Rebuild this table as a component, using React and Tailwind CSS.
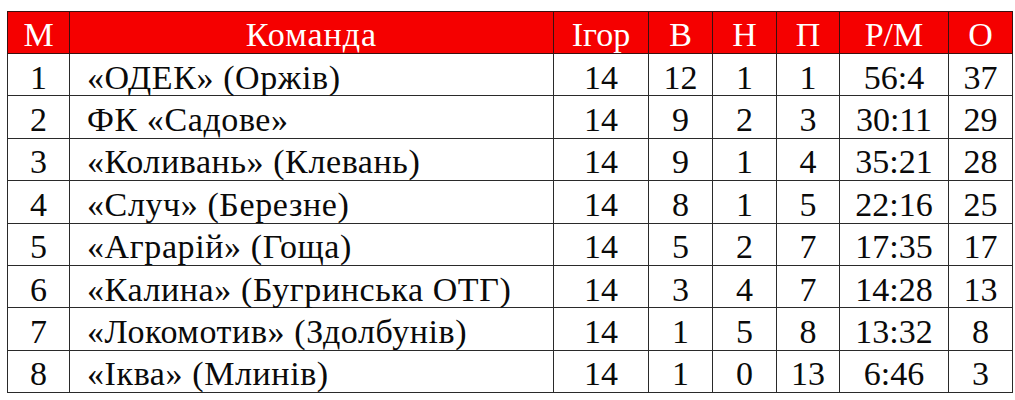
import React from "react";

const rows = [
  ["1", "«ОДЕК» (Оржів)", "14", "12", "1", "1", "56:4", "37"],
  ["2", "ФК «Садове»", "14", "9", "2", "3", "30:11", "29"],
  ["3", "«Коливань» (Клевань)", "14", "9", "1", "4", "35:21", "28"],
  ["4", "«Случ» (Березне)", "14", "8", "1", "5", "22:16", "25"],
  ["5", "«Аграрій» (Гоща)", "14", "5", "2", "7", "17:35", "17"],
  ["6", "«Калина» (Бугринська ОТГ)", "14", "3", "4", "7", "14:28", "13"],
  ["7", "«Локомотив» (Здолбунів)", "14", "1", "5", "8", "13:32", "8"],
  ["8", "«Іква» (Млинів)", "14", "1", "0", "13", "6:46", "3"],
];

const headers = ["М", "Команда", "Ігор", "В", "Н", "П", "Р/М", "О"];
const widths = ["w-[62px]", "w-[484px]", "w-[95px]", "w-[64px]", "w-[64px]", "w-[63px]", "w-[109px]", "w-[64px]"];

export default function App() {
  return (
    <div className="w-[1015px] h-[400px] bg-white pt-[11px] pl-[7px] [font-family:Liberation_Serif,serif]">
      <table className="border-collapse table-fixed w-[1005px] text-[34px] leading-none">
        <colgroup>
          {widths.map((w, i) => (
            <col key={i} className={w} />
          ))}
        </colgroup>
        <thead>
          <tr className="h-[42px] bg-[#f50000]">
            {headers.map((h, i) => (
              <th
                key={i}
                className={
                  "border border-[#3a1010] text-white font-normal text-center align-middle p-0 pt-[4px] " +
                  (i === 1 ? "tracking-[1px]" : "")
                }
              >
                {h}
              </th>
            ))}
          </tr>
        </thead>
        <tbody>
          {rows.map((r, ri) => (
            <tr key={ri} className="h-[42.4px]">
              {r.map((c, ci) => (
                <td
                  key={ci}
                  className={
                    "border border-[#2a2a2a] text-[#0a0a0a] align-middle p-0 pt-[6px] " +
                    (ci === 1 ? "text-left pl-[17px] tracking-[0.6px]" : "text-center")
                  }
                >
                  {c}
                </td>
              ))}
            </tr>
          ))}
        </tbody>
      </table>
    </div>
  );
}
